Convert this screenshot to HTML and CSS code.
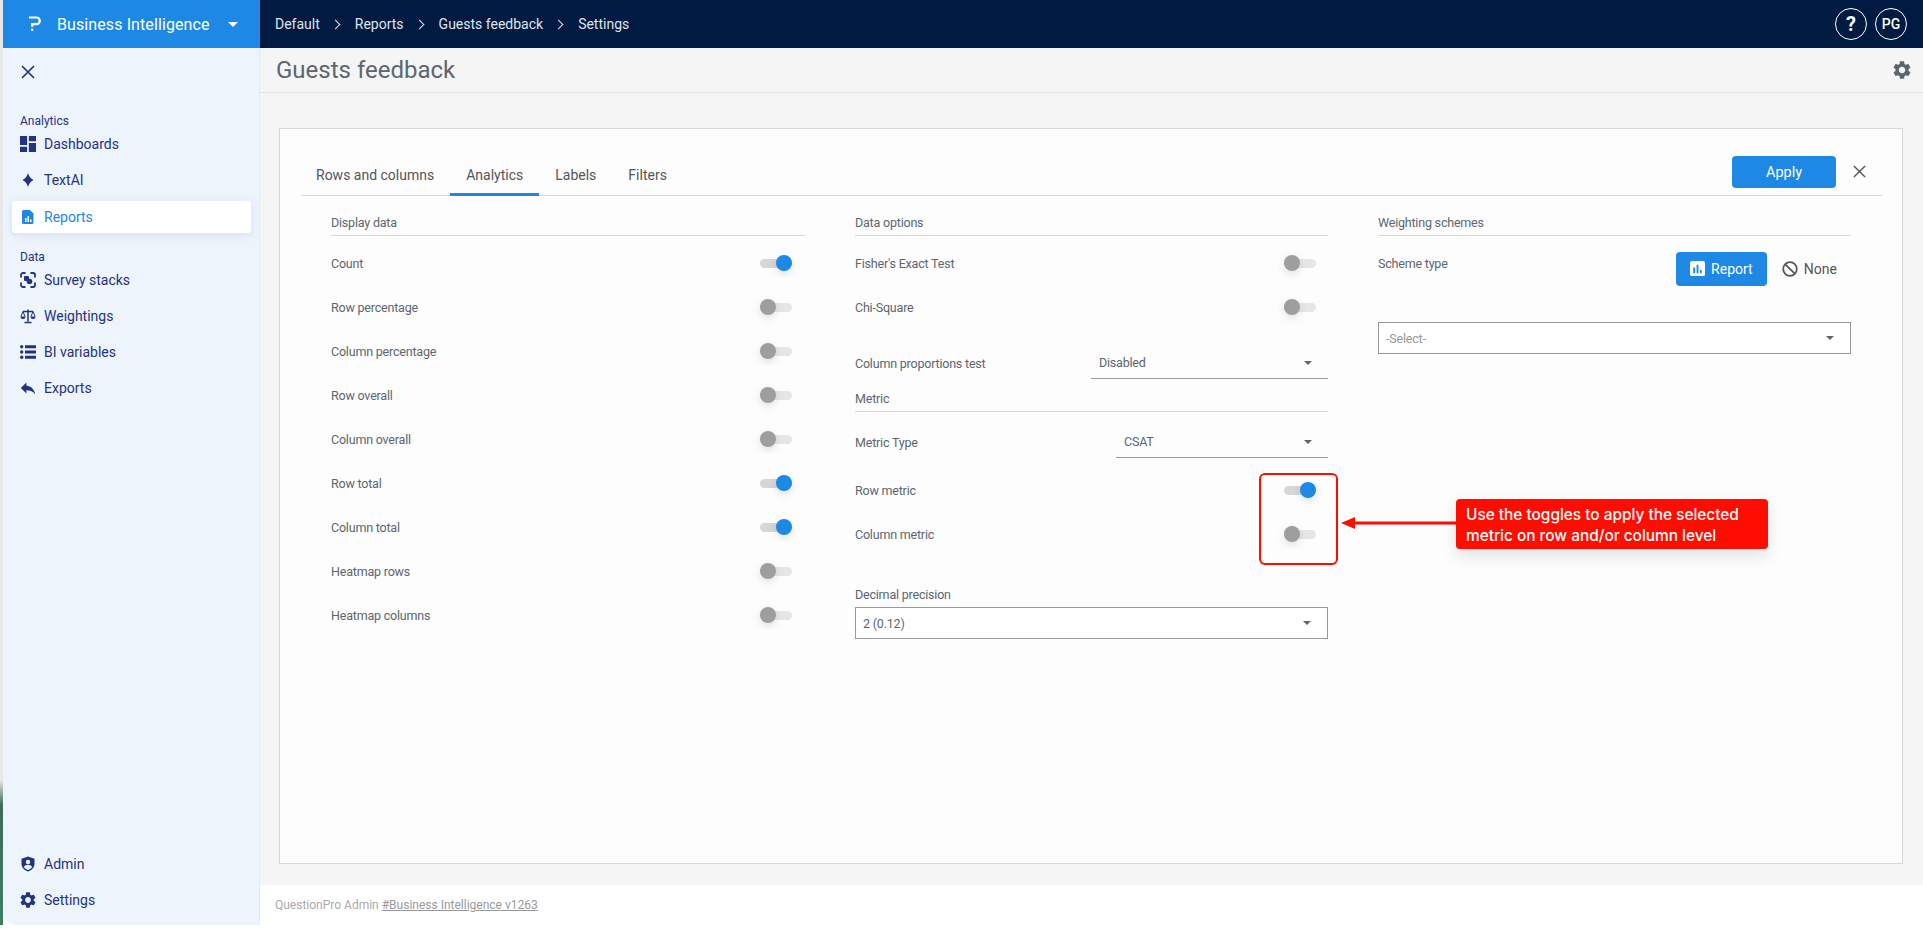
FILE: index.html
```html
<!DOCTYPE html>
<html>

<head>
  <title>Guests feedback</title>
  <link rel="stylesheet" href="styles.css">
</head>

<body>
  <div class="app">
    <div class="brand">
      <svg class="logo" viewBox="0 0 14 16"><path d="M1 1.5h7.5a3.3 3.3 0 0 1 0 6.6H4.2v2.6" fill="none" stroke="#fff" stroke-width="2.2"/><rect x="3" y="12.6" width="2.4" height="2.4" rx="1" fill="#fff"/></svg>
      <span class="brand-name">Business Intelligence</span>
      <span class="caret caret-white"></span>
    </div>

    <header class="topbar">
      <nav class="crumbs">
        <span>Default</span><span class="sep"></span>
        <span>Reports</span><span class="sep"></span>
        <span>Guests feedback</span><span class="sep"></span>
        <span>Settings</span>
      </nav>
      <div class="top-actions">
        <span class="round round-help">?</span>
        <span class="round">PG</span>
      </div>
    </header>

    <aside class="sidebar">
      <svg class="side-close" viewBox="0 0 14 14"><path d="M1 1l12 12M13 1L1 13" stroke="#24337f" stroke-width="1.7" fill="none"/></svg>
      <div class="side-title side-title-first">Analytics</div>
      <a class="side-item">
        <svg viewBox="3 3 18 18"><path d="M3 13h8V3H3v10zm0 8h8v-6H3v6zm10 0h8V11h-8v10zm0-18v6h8V3h-8z"/></svg>
        Dashboards
      </a>
      <a class="side-item">
        <svg viewBox="0 0 16 16"><path d="M8 1Q9.300 6 13.500 8 9.300 10 8 15 6.700 10 2.500 8 6.700 6 8 1z"/></svg>
        TextAI
      </a>
      <a class="side-item side-active">
        <svg viewBox="0 0 16 16"><path d="M3.500 1H10l3.500 3.500V13.500A1.500 1.500 0 0 1 12 15H3.500A1.500 1.500 0 0 1 2 13.500v-11A1.500 1.500 0 0 1 3.500 1z"/><path d="M5 9h1.500v4H5zM7.500 7H9v6H7.500zM10 10.500h1.500V13H10z" fill="#fff"/></svg>
        Reports
      </a>
      <div class="side-title">Data</div>
      <a class="side-item">
        <svg viewBox="0 0 16 16"><path d="M5.500 1H3a2 2 0 0 0-2 2v2.500M10.500 1H13a2 2 0 0 1 2 2v2.500M5.500 15H3a2 2 0 0 1-2-2v-2.500M10.500 15H13a2 2 0 0 0 2-2v-2.500" fill="none" stroke="#24337f" stroke-width="1.800"/><rect x="4" y="4" width="5" height="5" rx="1"/><circle cx="9.500" cy="9.500" r="2.800"/></svg>
        Survey stacks
      </a>
      <a class="side-item">
        <svg viewBox="0 0 16 16"><path d="M8 1.500v12M4.500 14.500h7M3 3.500h10" fill="none" stroke="#24337f" stroke-width="1.500"/><path d="M3 3.500L1 8.500M3 3.500l2 5M13 3.500l-2 5M13 3.500l2 5" fill="none" stroke="#24337f" stroke-width="1"/><path d="M.5 8.500a2.500 2.500 0 0 0 5 0zM10.500 8.500a2.500 2.500 0 0 0 5 0z"/></svg>
        Weightings
      </a>
      <a class="side-item">
        <svg viewBox="0 0 16 16"><circle cx="1.700" cy="2.800" r="1.700"/><circle cx="1.700" cy="8" r="1.700"/><circle cx="1.700" cy="13.200" r="1.700"/><path d="M5 1.300h11v3H5zM5 6.500h11v3H5zM5 11.700h11v3H5z"/></svg>
        BI variables
      </a>
      <a class="side-item">
        <svg viewBox="2 4 20 16"><path d="M10 9V5l-7 7 7 7v-4.100c5 0 8.500 1.600 11 5.100-1-5-4-10-11-11z"/></svg>
        Exports
      </a>
      <div class="side-bottom">
        <a class="side-item">
          <svg viewBox="0 0 16 16"><path d="M8 .5l6.500 2.300v5c0 3.700-2.700 6.500-6.500 7.700-3.800-1.200-6.500-4-6.500-7.700v-5z"/><circle cx="8" cy="6" r="2.200" fill="#edf4fc"/><path d="M3.800 11c1-1.600 2.500-2.300 4.200-2.300s3.200.7 4.200 2.300c-1 1.300-2.500 2.300-4.200 3-1.700-.7-3.200-1.700-4.200-3z" fill="#edf4fc"/></svg>
          Admin
        </a>
        <a class="side-item">
          <svg viewBox="2 2 20 20"><path d="M19.140 12.940c.04-.3.06-.61.06-.94 0-.32-.02-.64-.07-.94l2.030-1.580c.18-.14.23-.41.12-.61l-1.920-3.320c-.12-.22-.37-.29-.59-.22l-2.390.96c-.5-.38-1.030-.7-1.620-.94l-.36-2.540c-.04-.24-.24-.41-.48-.41h-3.840c-.24 0-.43.17-.47.41l-.36 2.540c-.59.24-1.130.57-1.620.94l-2.390-.96c-.22-.08-.47 0-.59.22L2.740 8.870c-.12.21-.08.47.12.61l2.030 1.580c-.05.3-.09.63-.09.94s.02.64.07.94l-2.030 1.580c-.18.14-.23.41-.12.61l1.920 3.320c.12.22.37.29.59.22l2.390-.96c.5.38 1.030.7 1.620.94l.36 2.540c.05.24.24.41.48.41h3.840c.24 0 .44-.17.47-.41l.36-2.540c.59-.24 1.130-.56 1.620-.94l2.390.96c.22.08.47 0 .59-.22l1.920-3.320c.12-.22.07-.47-.12-.61l-2.010-1.580zM12 15.600c-1.980 0-3.600-1.620-3.600-3.600s1.620-3.600 3.600-3.600 3.600 1.620 3.600 3.600-1.620 3.600-3.600 3.600z"/></svg>
          Settings
        </a>
      </div>
    </aside>

    <main class="main">
      <div class="page-head">
        <h1>Guests feedback</h1>
        <svg class="page-gear" viewBox="2 2 20 20"><path d="M19.140 12.940c.04-.3.06-.61.06-.94 0-.32-.02-.64-.07-.94l2.030-1.580c.18-.14.23-.41.12-.61l-1.920-3.320c-.12-.22-.37-.29-.59-.22l-2.390.96c-.5-.38-1.030-.7-1.620-.94l-.36-2.540c-.04-.24-.24-.41-.48-.41h-3.840c-.24 0-.43.17-.47.41l-.36 2.540c-.59.24-1.130.57-1.620.94l-2.390-.96c-.22-.08-.47 0-.59.22L2.740 8.870c-.12.21-.08.47.12.61l2.030 1.580c-.05.3-.09.63-.09.94s.02.64.07.94l-2.030 1.580c-.18.14-.23.41-.12.61l1.920 3.320c.12.22.37.29.59.22l2.390-.96c.5.38 1.030.7 1.620.94l.36 2.540c.05.24.24.41.48.41h3.840c.24 0 .44-.17.47-.41l.36-2.540c.59-.24 1.130-.56 1.620-.94l2.390.96c.22.08.47 0 .59-.22l1.920-3.320c.12-.22.07-.47-.12-.61l-2.010-1.580zM12 15.600c-1.980 0-3.600-1.620-3.600-3.600s1.620-3.600 3.600-3.600 3.600 1.620 3.600 3.600-1.620 3.600-3.600 3.600z"/></svg>
      </div>

      <div class="canvas">
        <section class="card">
          <div class="tabbar">
            <div class="tabs">
              <a class="tab">Rows and columns</a>
              <a class="tab tab-active">Analytics</a>
              <a class="tab">Labels</a>
              <a class="tab">Filters</a>
            </div>
            <button class="btn-apply" type="button">Apply</button>
            <svg class="tab-close" viewBox="0 0 14 14"><path d="M1 1l12 12M13 1L1 13" stroke="#555" stroke-width="1.500" fill="none"/></svg>
          </div>

          <div class="columns">
            <div class="col col-first">
              <div class="section-head">Display data</div>
              <div class="row">Count<span class="toggle on"></span></div>
              <div class="row">Row percentage<span class="toggle"></span></div>
              <div class="row">Column percentage<span class="toggle"></span></div>
              <div class="row">Row overall<span class="toggle"></span></div>
              <div class="row">Column overall<span class="toggle"></span></div>
              <div class="row">Row total<span class="toggle on"></span></div>
              <div class="row">Column total<span class="toggle on"></span></div>
              <div class="row">Heatmap rows<span class="toggle"></span></div>
              <div class="row">Heatmap columns<span class="toggle"></span></div>
            </div>

            <div class="col">
              <div class="section-head">Data options</div>
              <div class="row">Fisher's Exact Test<span class="toggle"></span></div>
              <div class="row">Chi-Square<span class="toggle"></span></div>
              <div class="select-row select-row-first">
                Column proportions test
                <div class="line-select line-select-wide">Disabled<span class="caret"></span></div>
              </div>
              <div class="section-head section-head-metric">Metric</div>
              <div class="select-row select-row-metric">
                Metric Type
                <div class="line-select">CSAT<span class="caret"></span></div>
              </div>
              <div class="metric-rows">
                <div class="row">Row metric<span class="toggle on"></span></div>
                <div class="row">Column metric<span class="toggle"></span></div>
              </div>
              <div class="field-label">Decimal precision</div>
              <div class="box-select">2 (0.12)<span class="caret"></span></div>
            </div>

            <div class="col">
              <div class="section-head">Weighting schemes</div>
              <div class="scheme-row">
                <span class="scheme-label">Scheme type</span>
                <button class="btn-report" type="button">
                  <svg viewBox="0 0 16 16"><rect width="16" height="16" rx="2" fill="#fff"/><path d="M3.500 7h2v6h-2zM7 4h2v9H7zM10.500 9.500h2V13h-2z" fill="#1e88e5"/></svg>
                  Report
                </button>
                <span class="scheme-none">
                  <svg viewBox="0 0 16 16"><circle cx="8" cy="8" r="6.800" fill="none" stroke="#555" stroke-width="1.700"/><path d="M3.300 3.300l9.400 9.400" stroke="#555" stroke-width="1.700"/></svg>
                  None
                </span>
              </div>
              <div class="box-select box-select-scheme"><span class="placeholder">-Select-</span><span class="caret"></span></div>
            </div>
          </div>

          <div class="note-frame"></div>
          <svg class="note-arrow" viewBox="0 0 116 14"><path d="M0 7l14-6v4.500h102v3H14V13z" fill="#ff0d00"/></svg>
          <div class="note">Use the toggles to apply the selected metric on row and/or column level</div>
        </section>
      </div>

      <footer class="footer">QuestionPro Admin <a>#Business Intelligence v1263</a></footer>
    </main>
  </div>
</body>

</html>
```

FILE: styles.css
```css
* {
  box-sizing: border-box;
}

html,
body {
  margin: 0;
  height: 929px;
  overflow: hidden;
}

body {
  font-family: Roboto, "Noto Sans", sans-serif;
  font-size: 13px;
  color: #5c6670;
  padding-left: 3px;
  background: #fff linear-gradient(to bottom, #e8e8e8 0, #e8e8e8 780px, #3f6b55 805px, #3f7f62 925px, #fff 925px) no-repeat;
  background-size: 3px 100%;
}

.app {
  display: grid;
  grid-template-columns: 257px 1fr;
  grid-template-rows: 48px 1fr;
  height: 929px;
}

/* top bar */
.brand {
  background-color: #1e88e5;
  color: #fff;
  display: flex;
  align-items: center;
  padding-left: 25px;
}

.logo {
  width: 14px;
  height: 16px;
}

.brand-name {
  font-size: 16px;
  margin-left: 15px;
  letter-spacing: 0.1px;
}

.topbar {
  background-color: #001a42;
  color: #dfe4ec;
  display: flex;
  align-items: center;
  justify-content: space-between;
  padding: 0 16px 0 15px;
}

.crumbs {
  display: flex;
  align-items: center;
  font-size: 14px;
}

.sep {
  width: 7px;
  height: 7px;
  margin: 0 16px 0 12px;
  border-top: 1.6px solid #dfe4ec;
  border-right: 1.6px solid #dfe4ec;
  transform: rotate(45deg);
}

.top-actions {
  display: flex;
  gap: 8px;
}

.round {
  width: 32px;
  height: 32px;
  border: 1px solid #fff;
  border-radius: 50%;
  display: flex;
  align-items: center;
  justify-content: center;
  color: #fff;
  font-size: 14px;
  font-weight: 500;
}

.round-help {
  font-size: 20px;
  font-weight: 700;
}

.caret {
  width: 0;
  height: 0;
  border-left: 4px solid transparent;
  border-right: 4px solid transparent;
  border-top: 4px solid #5c6670;
}

.caret-white {
  border-left-width: 5px;
  border-right-width: 5px;
  border-top: 5px solid #fff;
  margin-left: 18px;
}

/* sidebar */
.sidebar {
  background-color: #edf4fc;
  color: #24337f;
  display: flex;
  flex-direction: column;
  height: 877px;
  padding: 17px 8px 7px 9px;
  border-bottom-left-radius: 14px;
  border-right: 1px solid #e6ebf2;
  font-size: 14px;
}

.side-close {
  width: 14px;
  height: 14px;
  margin: 0 0 0 9px;
  flex: none;
}

.side-title {
  font-size: 12px;
  line-height: 16px;
  padding: 1px 0 0 8px;
  margin: 14px 0 -1px;
}

.side-title-first {
  margin-top: 33px;
}

.side-item {
  display: flex;
  align-items: center;
  gap: 8px;
  height: 36px;
  padding-left: 8px;
  border-radius: 3px;
}

.side-title + .side-item {
  height: 32px;
  margin-bottom: 2px;
}

.side-item svg {
  width: 16px;
  height: 16px;
  fill: #24337f;
  flex: none;
}

.side-active {
  background-color: #fff;
  color: #1e88e5;
  height: 32px;
  margin: 3px 0 1px;
  padding-bottom: 1px;
  box-shadow: 0 2px 10px rgba(40, 70, 130, 0.12);
}

.side-active svg {
  fill: #1e88e5;
}

.side-bottom {
  margin-top: auto;
}

/* page */
.main {
  display: flex;
  flex-direction: column;
  min-width: 0;
}

.page-head {
  height: 45px;
  flex: none;
  background-color: #f5f5f5;
  border-bottom: 1px solid #e4e4e4;
  display: flex;
  align-items: center;
  justify-content: space-between;
  padding: 0 12px 0 16px;
}

h1 {
  margin: 0;
  font-size: 24px;
  font-weight: 400;
  color: #5c6670;
}

.page-gear {
  width: 18px;
  height: 18px;
  fill: #5c6670;
}

.canvas {
  height: 792px;
  flex: none;
  background-color: #f5f5f5;
  padding: 35px 20px 21px 19px;
}

.card {
  position: relative;
  height: 736px;
  background-color: #fdfdfd;
  border: 1px solid #d8d8d8;
  padding: 27px 20px 0 21px;
}

.tabbar {
  display: flex;
  align-items: flex-start;
  height: 40px;
  border-bottom: 1px solid #d8d8d8;
}

.tabs {
  display: flex;
  flex: 1;
  height: 40px;
  font-size: 14px;
  color: #555;
}

.tab {
  padding: 11px 16px 0;
  height: 40px;
}

.tab:first-child {
  padding-left: 15px;
}

.tab-active {
  border-bottom: 3px solid #1e88e5;
}

.btn-apply {
  width: 104px;
  height: 32px;
  border: 0;
  border-radius: 4px;
  background-color: #1e88e5;
  color: #fff;
  font: 14.5px Roboto, sans-serif;
}

.tab-close {
  width: 13px;
  height: 13px;
  margin: 9px 16px 0 17px;
}

.columns {
  display: grid;
  grid-template-columns: 474px 473px 473px;
  gap: 50px;
  padding: 16px 0 0 30px;
}

.section-head {
  font-size: 12.5px;
  letter-spacing: -0.2px;
  line-height: 20px;
  padding: 1px 0 2px;
  border-bottom: 1px solid #d8d8d8;
  margin-bottom: 5px;
}

.row {
  height: 44px;
  display: flex;
  align-items: center;
  justify-content: space-between;
  padding-right: 12px;
  font-size: 12.5px;
  letter-spacing: -0.2px;
}

.col-first .row {
  padding-right: 13px;
}

.toggle {
  position: relative;
  width: 32px;
  height: 9px;
  border-radius: 5px;
  background-color: #e6e6e6;
}

.toggle::after {
  content: "";
  position: absolute;
  left: 0;
  top: -4px;
  width: 16px;
  height: 16px;
  border-radius: 50%;
  background-color: #9e9e9e;
  box-shadow: 0 3px 8px rgba(0, 0, 0, 0.12);
}

.toggle.on {
  background-color: #d6d6d6;
}

.toggle.on::after {
  left: 16px;
  background-color: #1e88e5;
}

.select-row {
  display: flex;
  align-items: center;
  justify-content: space-between;
  height: 32px;
  font-size: 12.5px;
  letter-spacing: -0.2px;
}

.select-row-first {
  margin-top: 18px;
}

.select-row-metric {
  margin-top: 14px;
}

.line-select {
  width: 212px;
  height: 32px;
  display: flex;
  align-items: center;
  justify-content: space-between;
  padding: 0 16px 0 8px;
  border-bottom: 1px solid #999;
}

.line-select-wide {
  width: 237px;
}

.section-head-metric {
  margin: 9px 0 0;
}

.metric-rows {
  margin-top: 10px;
}

.field-label {
  font-size: 12.5px;
  letter-spacing: -0.2px;
  line-height: 20px;
  margin-top: 29px;
}

.box-select {
  height: 32px;
  margin-top: 2px;
  padding: 0 16px 0 7px;
  border: 1px solid #999;
  display: flex;
  align-items: center;
  justify-content: space-between;
  font-size: 12.5px;
  letter-spacing: -0.2px;
  background-color: #fff;
}

.box-select-scheme {
  margin-top: 37px;
}

.placeholder {
  color: #999;
}

.scheme-row {
  display: flex;
  align-items: center;
  height: 44px;
  font-size: 12.5px;
  letter-spacing: -0.2px;
}

.scheme-label {
  flex: 1;
}

.btn-report {
  width: 91px;
  height: 34px;
  margin-top: 11px;
  border: 0;
  border-radius: 4px;
  background-color: #1e88e5;
  color: #fff;
  font: 14px Roboto, sans-serif;
  display: flex;
  align-items: center;
  justify-content: center;
  gap: 6px;
}

.btn-report svg {
  width: 15px;
  height: 15px;
}

.scheme-none {
  display: flex;
  align-items: center;
  gap: 6px;
  margin: 11px 14px 0 15px;
  font-size: 14px;
  letter-spacing: 0;
  color: #555;
}

.scheme-none svg {
  width: 16px;
  height: 16px;
}

/* annotation drawn over the settings */
.note-frame {
  position: absolute;
  left: 979px;
  top: 344px;
  width: 79px;
  height: 92px;
  border: 2px solid #ff0d00;
  border-radius: 6px;
}

.note-arrow {
  position: absolute;
  left: 1061px;
  top: 387px;
  width: 116px;
  height: 14px;
}

.note {
  position: absolute;
  left: 1176px;
  top: 370px;
  width: 312px;
  height: 50px;
  padding: 5px 10px;
  background-color: #ff0d00;
  border-radius: 4px;
  color: #fff;
  font: 500 15.4px/21px Inter, sans-serif;
  box-shadow: 0 6px 16px rgba(0, 0, 0, 0.12);
}

.footer {
  flex: 1;
  background-color: #fff;
  padding: 13px 0 0 15px;
  font-size: 12px;
  color: #aaa;
}

.footer a {
  text-decoration: underline;
  color: #999;
}
```
